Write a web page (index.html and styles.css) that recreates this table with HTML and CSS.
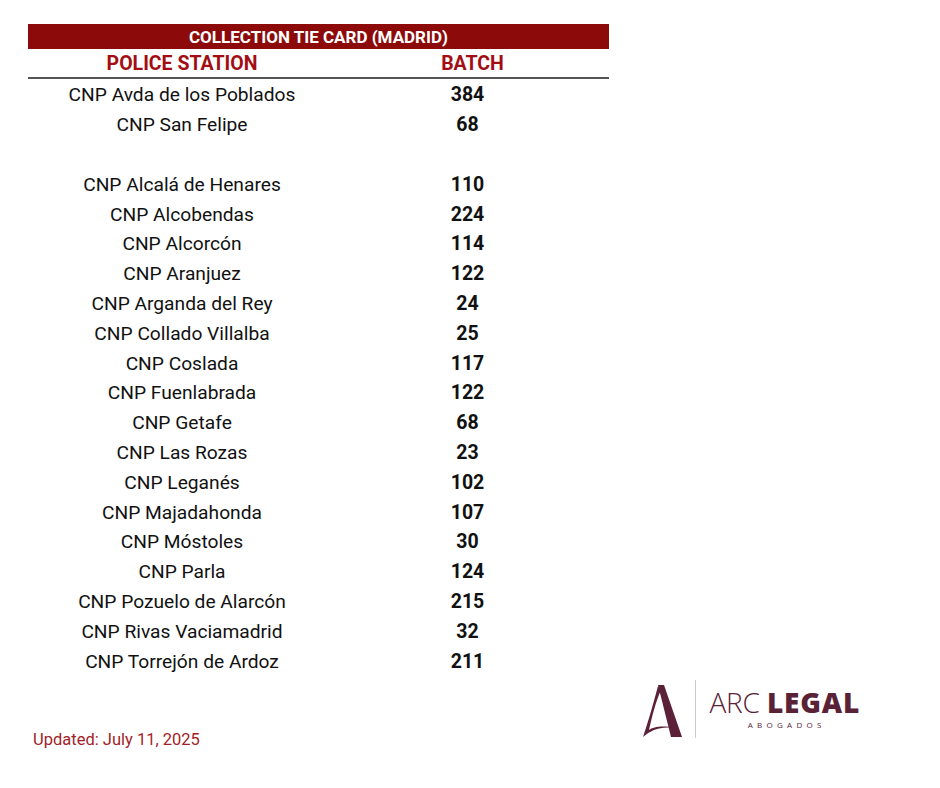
FILE: index.html
```html
<!DOCTYPE html>
<html lang="en">
<head>
<meta charset="utf-8">
<title>Collection TIE Card (Madrid)</title>
<link rel="stylesheet" href="styles.css">
</head>
<body>
<div class="page">
  <div class="sheet">
    <div class="title-bar">COLLECTION TIE CARD (MADRID)</div>
    <div class="head-row">
      <div class="col-station">POLICE STATION</div>
      <div class="col-batch">BATCH</div>
    </div>
    <div class="rows">
      <div class="row"><div class="col-station">CNP Avda de los Poblados</div><div class="col-batch num">384</div></div>
      <div class="row"><div class="col-station">CNP San Felipe</div><div class="col-batch num">68</div></div>
      <div class="row"><div class="col-station"></div><div class="col-batch num"></div></div>
      <div class="row"><div class="col-station">CNP Alcalá de Henares</div><div class="col-batch num">110</div></div>
      <div class="row"><div class="col-station">CNP Alcobendas</div><div class="col-batch num">224</div></div>
      <div class="row"><div class="col-station">CNP Alcorcón</div><div class="col-batch num">114</div></div>
      <div class="row"><div class="col-station">CNP Aranjuez</div><div class="col-batch num">122</div></div>
      <div class="row"><div class="col-station">CNP Arganda del Rey</div><div class="col-batch num">24</div></div>
      <div class="row"><div class="col-station">CNP Collado Villalba</div><div class="col-batch num">25</div></div>
      <div class="row"><div class="col-station">CNP Coslada</div><div class="col-batch num">117</div></div>
      <div class="row"><div class="col-station">CNP Fuenlabrada</div><div class="col-batch num">122</div></div>
      <div class="row"><div class="col-station">CNP Getafe</div><div class="col-batch num">68</div></div>
      <div class="row"><div class="col-station">CNP Las Rozas</div><div class="col-batch num">23</div></div>
      <div class="row"><div class="col-station">CNP Leganés</div><div class="col-batch num">102</div></div>
      <div class="row"><div class="col-station">CNP Majadahonda</div><div class="col-batch num">107</div></div>
      <div class="row"><div class="col-station">CNP Móstoles</div><div class="col-batch num">30</div></div>
      <div class="row"><div class="col-station">CNP Parla</div><div class="col-batch num">124</div></div>
      <div class="row"><div class="col-station">CNP Pozuelo de Alarcón</div><div class="col-batch num">215</div></div>
      <div class="row"><div class="col-station">CNP Rivas Vaciamadrid</div><div class="col-batch num">32</div></div>
      <div class="row"><div class="col-station">CNP Torrejón de Ardoz</div><div class="col-batch num">211</div></div>
    </div>
  </div>
  <div class="footer">
    <div class="updated">Updated: July 11, 2025</div>
    <div class="logo">
      <svg class="logo-mark" width="42" height="54" viewBox="0 0 42 54" aria-hidden="true">
        <path d="M17 1 L23 1 L41 53 L30 53 Z" fill="#5b2138"/>
        <path d="M17 2 C13 17, 8 35, 2 53 C10 46, 20 42, 33 44 C22 41, 12 43, 8 46 C11 32, 15 17, 20 6 Z" fill="#5b2138"/>
      </svg>
      <div class="logo-divider"></div>
      <div class="logo-text">
        <div class="logo-name"><span class="light">ARC</span> <span class="heavy">LEGAL</span></div>
        <div class="logo-sub">ABOGADOS</div>
      </div>
    </div>
  </div>
</div>
</body>
</html>
```

FILE: styles.css
```css
html, body {
  margin: 0;
  padding: 0;
  background: #ffffff;
}

body {
  font-family: Roboto, "Liberation Sans", sans-serif;
  color: #111111;
}

.page {
  padding: 24px 0 0 28px;
  width: 840px;
}

.sheet {
  width: 581px;
}

.title-bar {
  background: #8c0a0a;
  color: #ffffff;
  font-weight: 700;
  font-size: 17px;
  height: 25px;
  line-height: 26px;
  text-align: center;
}

.head-row {
  display: flex;
  height: 28px;
  align-items: center;
  border-bottom: 2px solid #555555;
  color: #a30d14;
  font-weight: 700;
  font-size: 19.5px;
}

.col-station {
  width: 308px;
  text-align: center;
}

.col-batch {
  width: 273px;
  text-align: center;
}

.rows {
  padding-top: 1px;
}

.row {
  display: flex;
  height: 29.8px;
  align-items: center;
  font-size: 19.2px;
}

.num {
  font-weight: 700;
  font-size: 19.5px;
  padding-right: 10px;
  box-sizing: border-box;
}

.footer {
  display: flex;
  justify-content: space-between;
  align-items: flex-start;
  margin-top: 4px;
  padding-left: 5px;
  width: 827px;
}

.updated {
  color: #a31d28;
  font-size: 16.5px;
  margin-top: 50px;
}

.logo {
  display: flex;
  align-items: center;
}

.logo-mark {
  display: block;
  margin-right: 12px;
  margin-top: 4px;
}

.logo-divider {
  width: 1px;
  height: 58px;
  background: #cfc8ca;
  margin-right: 13px;
}

.logo-text {
  display: flex;
  flex-direction: column;
  align-items: center;
  color: #5a2236;
  margin-top: 2px;
}

.logo-name {
  font-family: "Open Sans", Lato, sans-serif;
  font-size: 28px;
  line-height: 24px;
  white-space: nowrap;
}

.logo-name .light {
  font-weight: 300;
  letter-spacing: -0.2px;
}

.logo-name .heavy {
  font-weight: 800;
  letter-spacing: 0.8px;
}

.logo-sub {
  font-family: "Open Sans", sans-serif;
  font-size: 8px;
  line-height: 10px;
  letter-spacing: 4.3px;
  margin-top: 6px;
  padding-left: 4px;
}
```
